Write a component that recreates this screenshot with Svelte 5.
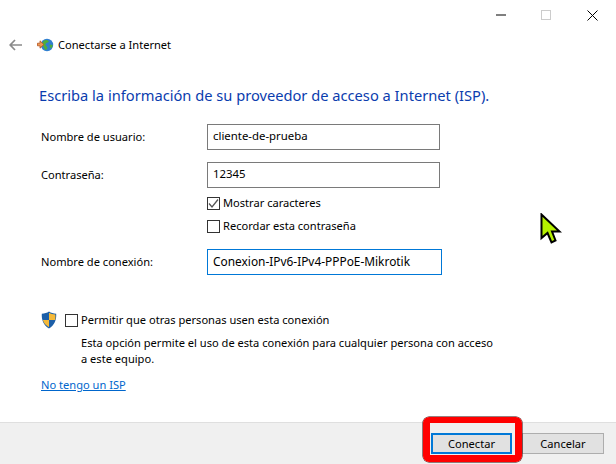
<script>
  const fieldRows = [
    { label: 'Nombre de usuario:', value: 'cliente-de-prueba' },
    { label: 'Contraseña:', value: '12345' }
  ];
</script>

<div class="win">
  <div class="titlebar">
    <svg class="wc min" width="10" height="2" viewBox="0 0 10 2"><path d="M0 1H10" stroke="#000" stroke-width="1"/></svg>
    <svg class="wc max" width="10" height="10" viewBox="0 0 10 10"><rect x=".5" y=".5" width="9" height="9" fill="none" stroke="#ccc"/></svg>
    <svg class="wc cls" width="11" height="11" viewBox="0 0 11 11"><path d="M.5 .5L10.5 10.5M10.5 .5L.5 10.5" stroke="#000" stroke-width="1"/></svg>
  </div>

  <div class="nav">
    <svg class="back" width="13" height="12" viewBox="0 0 13 12"><path d="M6 1L1.2 6L6 11M1.2 6H13" fill="none" stroke="#8a8a8a" stroke-width="1.7"/></svg>
    <svg class="globe" width="17" height="14" viewBox="0 0 17 14">
      <circle cx="10" cy="7" r="6.2" fill="#2f7fd0"/>
      <path d="M7 2.5C9 1.5 11 2 12 3.5C11 5 9 4.5 8.5 6C8 7.5 10 8 10.5 10C10 11.5 9 12 8.2 12C7 10 6 8 5.5 6C5.5 4.5 6 3.5 7 2.5Z" fill="#4fae3c"/>
      <path d="M12.5 6.5L15.8 7L14.5 10.5L12.8 9Z" fill="#4fae3c"/>
      <path d="M.5 5.2H3V2.8L6.8 6.5L3 10.2V7.8H.5Z" fill="#ef9a54" stroke="#b4501c" stroke-width=".8"/>
    </svg>
    <span>Conectarse a Internet</span>
  </div>

  <h1>Escriba la información de su proveedor de acceso a Internet (ISP).</h1>

  <div class="form">
    {#each fieldRows as f}
      <span class="lbl">{f.label}</span>
      <div class="input">{f.value}</div>
    {/each}
    <div class="checks">
      <label class="chk"><span class="box">
        <svg width="11" height="11" viewBox="0 0 11 11"><path d="M1 5.5L4 9L10 1.5" fill="none" stroke="#555" stroke-width="1.3"/></svg>
      </span>Mostrar caracteres</label>
      <label class="chk"><span class="box"></span>Recordar esta contraseña</label>
    </div>
    <span class="lbl">Nombre de conexión:</span>
    <div class="input focus">Conexion-IPv6-IPv4-PPPoE-Mikrotik</div>
  </div>

  <div class="permit">
    <svg class="shield" width="16" height="18" viewBox="0 0 16 18">
      <path d="M8 .6C10 2 12.5 2.6 15.2 2.8C15.6 9 13.5 14.5 8 17.4C2.5 14.5 .4 9 .8 2.8C3.5 2.6 6 2 8 .6Z" fill="#1c5fa8"/>
      <path d="M8 1.8V9H14.2C14.5 7 14.5 5.2 14.3 3.6C12 3.3 9.8 2.9 8 1.8Z" fill="#f4b93a"/>
      <path d="M8 9V16.2C4.5 14.2 2.6 11.8 1.9 9Z" fill="#f4b93a"/>
    </svg>
    <label class="chk"><span class="box"></span>Permitir que otras personas usen esta conexión</label>
  </div>
  <p class="note">Esta opción permite el uso de esta conexión para cualquier persona con acceso a este equipo.</p>
  <span class="link">No tengo un ISP</span>

  <div class="footer">
    <button class="btn default">Conectar</button>
    <button class="btn">Cancelar</button>
  </div>

  <div class="highlight"></div>
  <svg class="cursor" width="22" height="32" viewBox="0 0 22 32">
    <path d="M1.5 1.5V25L7.5 20L11.5 29.5L15.5 27.5L12 18.5H19.5Z" fill="#b5f000" stroke="#000" stroke-width="2"/>
  </svg>
</div>

<style>
  :global(body) { margin: 0; background: #fff; }
  .win {
    position: relative;
    width: 616px;
    height: 464px;
    box-sizing: border-box;
    overflow: hidden;
    background: #fff;
    color: #000;
    font: 11.1px/16px "Noto Sans", "Open Sans", sans-serif;
    display: flex;
    flex-direction: column;
  }
  .titlebar { height: 30px; flex: none; display: flex; align-items: center; justify-content: flex-end; }
  .wc { flex: none; }
  .min { margin-right: 35px; }
  .max { margin-right: 36px; }
  .cls { margin-right: 18px; }
  .nav { height: 30px; flex: none; display: flex; align-items: center; padding-left: 9px; }
  .back { margin-right: 15px; }
  .globe { margin-right: 4px; }
  h1 {
    margin: 24px 0 0 39px;
    font-weight: 400;
    font-size: 14.66px;
    line-height: 22px;
    color: #0a3cae;
    white-space: nowrap;
  }
  .form {
    margin: 18px 0 0 41px;
    display: grid;
    grid-template-columns: 166px 233px;
    align-items: center;
    row-gap: 12px;
  }
  .input {
    box-sizing: border-box;
    height: 26px;
    border: 1px solid #7a7a7a;
    padding: 3px 5px;
    white-space: nowrap;
    font-size: 11.4px;
  }
  .focus { border-color: #0078d7; width: 235px; font-size: 11.9px; }
  .checks {
    grid-column: 2;
    margin: -5px 0 3px;
    display: flex;
    flex-direction: column;
    gap: 7px;
  }
  .chk { display: flex; align-items: center; gap: 3px; height: 16px; white-space: nowrap; }
  .box {
    box-sizing: border-box;
    width: 13px;
    height: 13px;
    flex: none;
    border: 1px solid #333;
    display: flex;
    align-items: center;
    justify-content: center;
  }
  .permit { margin: 36px 0 0 41px; display: flex; align-items: center; height: 18px; }
  .shield { margin-right: 8px; }
  .note { margin: 6px 0 0 81px; width: 416px; }
  .link { margin: 10px 0 0 41px; color: #0066cc; text-decoration: underline; align-self: flex-start; }
  .footer {
    margin-top: auto;
    height: 42px;
    box-sizing: border-box;
    background: #f0f0f0;
    border-top: 1px solid #dfdfdf;
    display: flex;
    justify-content: flex-end;
    align-items: center;
    gap: 10px;
    padding: 0 12px 0 0;
  }
  .btn {
    box-sizing: border-box;
    width: 82px;
    height: 21px;
    background: #e1e1e1;
    border: 1px solid #adadad;
    font: inherit;
    color: #000;
    padding: 0;
  }
  .default { border: 2px solid #0078d7; width: 81px; }
  .highlight {
    position: absolute;
    left: 423px;
    top: 417px;
    width: 99px;
    height: 45px;
    box-sizing: border-box;
    border: 7px solid #f00;
    border-top-width: 6px;
    border-radius: 6px;
    box-shadow: 0 0 0 .5px #300;
  }
  .cursor { position: absolute; left: 540px; top: 213px; }
</style>
